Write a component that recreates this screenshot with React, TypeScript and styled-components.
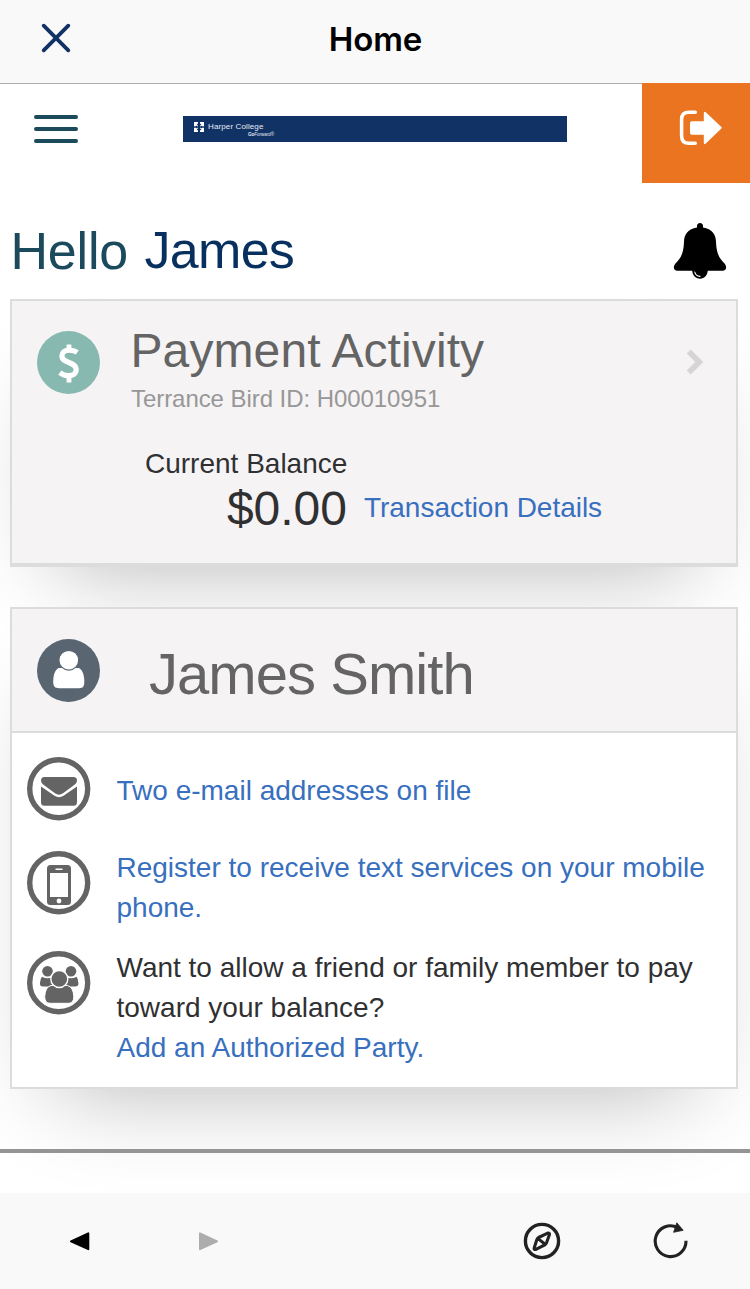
import React from "react";
import styled, { createGlobalStyle } from "styled-components";

const GlobalStyle = createGlobalStyle`
  *, *::before, *::after { box-sizing: border-box; }
  body { margin: 0; background: #fff; font-family: "Liberation Sans", Arial, sans-serif; }
  svg { display: block; flex: none; }
`;

const Page = styled.div`
  width: 750px;
  height: 1289px;
  overflow: hidden;
  display: flex;
  flex-direction: column;
  background: #fff;
`;

const TitleBar = styled.header`
  height: 83px;
  flex: none;
  display: grid;
  grid-template-columns: 112px 1fr 112px;
  align-items: center;
  justify-items: center;
  padding-bottom: 7px;
  background: #faf9fa;
`;

const PageTitle = styled.h1`
  margin: 2px 0 0 1px;
  font: 600 33px/40px Inter, sans-serif;
  letter-spacing: -0.1px;
  color: #000;
`;

const BrandBar = styled.div`
  height: 100px;
  flex: none;
  display: flex;
`;

const BrandMain = styled.div`
  flex: 1;
  display: flex;
  align-items: flex-start;
  border-top: 1px solid #adadad;
  padding: 31px 0 0 34px;
`;

const Banner = styled.div`
  width: 384px;
  height: 26px;
  margin: 1px 0 0 105px;
  padding: 6px 0 0 11px;
  display: flex;
  background: #113265;
  color: #e6ebf4;
`;

const BannerText = styled.div`
  display: flex;
  flex-direction: column;
  margin-left: 4px;
  width: 66px;
`;

const CollegeName = styled.span`
  font-size: 8px;
  line-height: 10px;
  letter-spacing: 0.12px;
  white-space: nowrap;
`;

const Tagline = styled.span`
  align-self: flex-end;
  font-size: 4.5px;
  line-height: 5px;
  font-style: italic;
  white-space: nowrap;
`;

const LogoutButton = styled.div`
  width: 108px;
  background: #ea7420;
  padding: 27px 0 0 37px;
`;

const Greeting = styled.div`
  height: 116px;
  flex: none;
  display: flex;
  justify-content: space-between;
  padding: 37px 23px 0 10.5px;
`;

const GreetingText = styled.h2`
  display: flex;
  margin: 0;
  font-weight: 400;
  font-size: 52px;
  line-height: 62px;
  letter-spacing: -0.2px;
  color: #1b4a5d;
`;

const GreetingName = styled.span`
  margin-left: 16.5px;
  font-size: 52px;
  letter-spacing: -0.7px;
  line-height: 60px;
  color: #08305f;
`;

const Card = styled.section<{ $height: number; $bottom: number }>`
  position: relative;
  flex: none;
  width: 728px;
  height: ${(p) => p.$height}px;
  margin: 0 0 40px 10px;
  border: 2px solid #dcdcdc;
  border-bottom-width: ${(p) => p.$bottom}px;
  background: #f5f3f4;
  box-shadow: 0 45px 90px -46px rgba(0, 0, 0, 0.3);
`;

const CardTop = styled.div`
  display: flex;
  align-items: flex-start;
  padding: 0 32px 0 25px;
`;

const Disc = styled.div<{ $color: string }>`
  flex: none;
  width: 63px;
  height: 63px;
  margin-top: 30px;
  border-radius: 50%;
  background: ${(p) => p.$color};
`;

const CardHeading = styled.div`
  flex: 1;
  padding: 22px 0 0 28px;
`;

const CardTitle = styled.h3`
  margin: 0 0 0 2.5px;
  font-weight: 400;
  font-size: 48px;
  line-height: 56px;
  letter-spacing: 0.1px;
  color: #646464;
`;

const CardSubtitle = styled.p`
  margin: 6px 0 0 3px;
  font-size: 24px;
  line-height: 28px;
  letter-spacing: -0.06px;
  color: #979797;
`;

const Chevron = styled.svg`
  margin-top: 47px;
`;

const BalanceBlock = styled.div`
  display: flex;
  align-items: flex-start;
  margin-top: 33px;
  padding-left: 133px;
`;

const Balance = styled.div`
  width: 202px;
  text-align: right;
  color: #303032;
`;

const BalanceLabel = styled.div`
  font-size: 28px;
  line-height: 36px;
  white-space: nowrap;
`;

const Amount = styled.div`
  font-size: 48px;
  line-height: 54px;
`;

const TransactionLink = styled.a`
  margin: 44px 0 0 17px;
  font-size: 28px;
  line-height: 36px;
  letter-spacing: -0.03px;
  color: #386fbe;
`;

const ProfileTop = styled(CardTop)`
  height: 124px;
  border-bottom: 2px solid #dcdcdc;
`;

const ProfileName = styled.h3`
  margin: 31px 0 0 49px;
  font-weight: 400;
  font-size: 58px;
  line-height: 67px;
  letter-spacing: -0.95px;
  color: #646464;
`;

const ProfileList = styled.div`
  height: 354px;
  padding: 24px 0 0 15px;
  background: #fff;
`;

const ProfileRow = styled.div<{ $height: number }>`
  display: flex;
  align-items: flex-start;
  height: ${(p) => p.$height}px;
`;

const RowText = styled.div<{ $top: number }>`
  margin-left: 25.5px;
  margin-top: ${(p) => p.$top}px;
  font-size: 28px;
  line-height: 40px;
  white-space: nowrap;
  color: #303032;
  a { color: #386fbe; }
`;

const Rule = styled.hr`
  flex: none;
  position: relative;
  width: 100%;
  height: 4px;
  margin: 20px 0 40px;
  border: 0;
  background: #949494;
`;

const Toolbar = styled.footer`
  position: relative;
  flex: none;
  height: 96px;
  display: flex;
  align-items: center;
  background: #faf9fa;
  padding-left: 69px;
`;

const ToolIcon = styled.svg<{ $gap?: number }>`
  margin-left: ${(p) => p.$gap ?? 0}px;
`;

const Ring = ({ children }: { children: React.ReactNode }) => (
  <svg width="64" height="64" viewBox="0 0 64 64" fill="#646464">
    <circle cx="31.7" cy="31.7" r="29" fill="#fff" stroke="#646464" strokeWidth="5.4" />
    {children}
  </svg>
);

export default function App() {
  return (
    <Page>
      <GlobalStyle />
      <TitleBar>
        <svg width="30" height="30" viewBox="0 0 30 30" stroke="#113265" strokeWidth="3.8" strokeLinecap="round">
          <path d="M2.7 2.7 27.3 27.3M27.3 2.7 2.7 27.3" />
        </svg>
        <PageTitle>Home</PageTitle>
      </TitleBar>

      <BrandBar>
        <BrandMain>
          <svg width="44" height="28" viewBox="0 0 44 28" stroke="#1b4a5d" strokeWidth="4" strokeLinecap="round">
            <path d="M2 2H42M2 14H42M2 26H42" />
          </svg>
          <Banner>
            <svg width="10" height="10" viewBox="0 0 10 10" fill="#fff">
              <path d="M0 0H4V1.5L2.6 2.4 4 3.6 3.4 4.4 2 3.4V4.2H0ZM6 0H10V4.2H8V3.4L6.6 4.4 6 3.6 7.4 2.4 6 1.5ZM0 5.8H2V6.6L3.4 5.6 4 6.4 2.6 7.6 4 8.5V10H0ZM10 5.8V10H6V8.5L7.4 7.6 6 6.4 6.6 5.6 8 6.6V5.8Z" />
            </svg>
            <BannerText>
              <CollegeName>Harper College</CollegeName>
              <Tagline><b>Go</b>Forward®</Tagline>
            </BannerText>
          </Banner>
        </BrandMain>
        <LogoutButton>
          <svg width="44" height="36" viewBox="0 0 44 36">
            <path d="M16.3 2.3H10Q2.6 2.3 2.6 9.5V26Q2.6 33.3 10 33.3H16.3" fill="none" stroke="#fff" strokeWidth="3.5" strokeLinecap="round" />
            <path d="M13 11.2H24.8V3.2Q24.8.7 26.8 2.3L42.4 17Q43.2 17.8 42.4 18.6L26.8 33.6Q24.8 35.1 24.8 32.8V24.7H13Q11 24.7 11 22.7V13.2Q11 11.2 13 11.2Z" fill="#fff" />
          </svg>
        </LogoutButton>
      </BrandBar>

      <Greeting>
        <GreetingText>
          Hello<GreetingName>James</GreetingName>
        </GreetingText>
        <svg width="54" height="60" viewBox="0 0 54 60">
          <path d="M27 3C29 3 30 4.4 30 6V7.5C39 9 43 14.5 43 22C43.4 33 46 38 51.5 43.6C54.2 46.6 53.6 50.7 49.5 50.7H4.5C.4 50.7 -.2 46.6 2.5 43.6C8 38 10.6 33 11 22C11 14.5 15 9 24 7.5V6C24 4.4 25 3 27 3Z" />
          <path d="M19.2 50H34.8C34.8 55 31.5 58.7 27 58.7S19.2 55 19.2 50Z" />
          <path d="M21.8 52C22.3 54.5 24.3 56.2 27 56.4" fill="none" stroke="#fff" strokeWidth="1.1" strokeLinecap="round" />
        </svg>
      </Greeting>

      <Card $height={268} $bottom={4}>
        <CardTop>
          <Disc $color="#88b9b0">
            <svg width="63" height="63" viewBox="0 0 63 63" fill="none" stroke="#fff" strokeWidth="5.2">
              <path d="M32 13.5V19M32 45V51.5" strokeWidth="4.8" />
              <path d="M40.3 21.4C37.8 19.8 35 19.2 32.3 19.2C27.5 19.2 24.9 21.4 24.9 24.9C24.9 32.6 39.2 30.4 39.2 38.5C39.2 42.5 36 44.7 31.5 44.7C28 44.7 25.4 43.6 22.8 41.6" />
            </svg>
          </Disc>
          <CardHeading>
            <CardTitle>Payment Activity</CardTitle>
            <CardSubtitle>Terrance Bird ID: H00010951</CardSubtitle>
          </CardHeading>
          <Chevron width="18" height="28" viewBox="0 0 18 28" fill="none" stroke="#d5d5d5" strokeWidth="5.6">
            <path d="M2.7 3.6 13.3 14 2.7 24.4" />
          </Chevron>
        </CardTop>
        <BalanceBlock>
          <Balance>
            <BalanceLabel>Current Balance</BalanceLabel>
            <Amount>$0.00</Amount>
          </Balance>
          <TransactionLink>Transaction Details</TransactionLink>
        </BalanceBlock>
      </Card>

      <Card $height={482} $bottom={2}>
        <ProfileTop>
          <Disc $color="#596672">
            <svg width="63" height="63" viewBox="0 0 63 63" fill="#fff">
              <path d="M21.5 29H42C45.5 31 47.3 36 47.3 42.5C47.3 47.5 46 49.2 42 49.2H22C18 49.2 16.2 47.5 16.2 42.5C16.2 36 18 31 21.5 29Z" />
              <circle cx="31.8" cy="21.2" r="9.9" stroke="#596672" strokeWidth="1.2" />
            </svg>
          </Disc>
          <ProfileName>James Smith</ProfileName>
        </ProfileTop>
        <ProfileList>
          <ProfileRow $height={94}>
            <Ring>
              <path d="M14 23.5Q14 20 17.5 20H46.5Q50 20 50 23.5Q50 26 47.5 27.8L36 36.3Q32 39 28 36.3L16.5 27.8Q14 26 14 23.5Z" />
              <path d="M14 29.6 27.5 38.8Q32 41.6 36.5 38.8L50 29.6V45.2Q50 48.7 46.5 48.7H17.5Q14 48.7 14 45.2Z" />
            </Ring>
            <RowText $top={14}><a>Two e-mail addresses on file</a></RowText>
          </ProfileRow>
          <ProfileRow $height={100}>
            <Ring>
              <path fillRule="evenodd" d="M23.5 14H40.5Q44 14 44 17.5V50.5Q44 54 40.5 54H23.5Q20 54 20 50.5V17.5Q20 14 23.5 14ZM23 22V46H41V22Z" />
              <path d="M29 18.3H35" stroke="#fff" strokeWidth="1.4" strokeLinecap="round" />
              <circle cx="32" cy="50" r="2.4" fill="#fff" />
            </Ring>
            <RowText $top={-3}><a>Register to receive text services on your mobile<br />phone.</a></RowText>
          </ProfileRow>
          <ProfileRow $height={130}>
            <Ring>
              <circle cx="20.5" cy="20.2" r="5.3" />
              <circle cx="44" cy="20.2" r="5.3" />
              <path d="M15 25.8Q20.5 28.8 26 25.8L28 35.5H16Q12.6 35.5 13 32Q13.3 27.5 15 25.8ZM49.5 25.8Q44 28.8 38.5 25.8L37 35.5H48Q51.8 35.5 51.4 32Q51.1 27.5 49.5 25.8Z" />
              <path d="M24 34.5H40.5Q46.3 36 46.8 45.5Q46.8 52.3 41.5 52.3H23Q17.7 52.3 17.7 45.5Q18.2 36 24 34.5Z" stroke="#fff" strokeWidth="1" />
              <circle cx="32.3" cy="28" r="8.5" stroke="#fff" strokeWidth="1.4" />
            </Ring>
            <RowText $top={-3}>
              Want to allow a friend or family member to pay<br />toward your balance?<br />
              <a>Add an Authorized Party.</a>
            </RowText>
          </ProfileRow>
        </ProfileList>
      </Card>

      <Rule />

      <Toolbar>
        <ToolIcon width="21" height="20" viewBox="0 0 21 20">
          <path d="M2 10.3 19.3 2.4V18.2Z" stroke="#000" strokeWidth="2" strokeLinejoin="round" />
        </ToolIcon>
        <ToolIcon $gap={108} width="21" height="20" viewBox="0 0 21 20">
          <path d="M19 10.3 2 2.4V18.2Z" fill="#adadad" stroke="#adadad" strokeWidth="2" strokeLinejoin="round" />
        </ToolIcon>
        <ToolIcon $gap={304} width="38" height="38" viewBox="0 0 38 38" fill="none" stroke="#222" strokeWidth="3.4" strokeLinejoin="round">
          <circle cx="19" cy="19" r="16.6" />
          <path d="M11.2 26 13.8 17.8Q14.4 16.4 15.6 15.5L24.2 11.3Q27 10.4 26.4 12.8L23.6 20.6Q23 22 21.8 22.9L13.4 27.2Q10.5 28.2 11.2 26ZM15 16.6 22.2 22.2" strokeWidth="3.1" />
        </ToolIcon>
        <ToolIcon $gap={91.5} width="36" height="38" viewBox="0 0 36 38" fill="none">
          <path d="M33 18.7A15.4 15.4 0 1 1 24.5 5.4" stroke="#222" strokeWidth="3.1" />
          <path d="M23.8.8 30.2 8.3 20.6 10.3Z" fill="#222" stroke="#222" strokeWidth=".8" strokeLinejoin="round" />
        </ToolIcon>
      </Toolbar>
    </Page>
  );
}
